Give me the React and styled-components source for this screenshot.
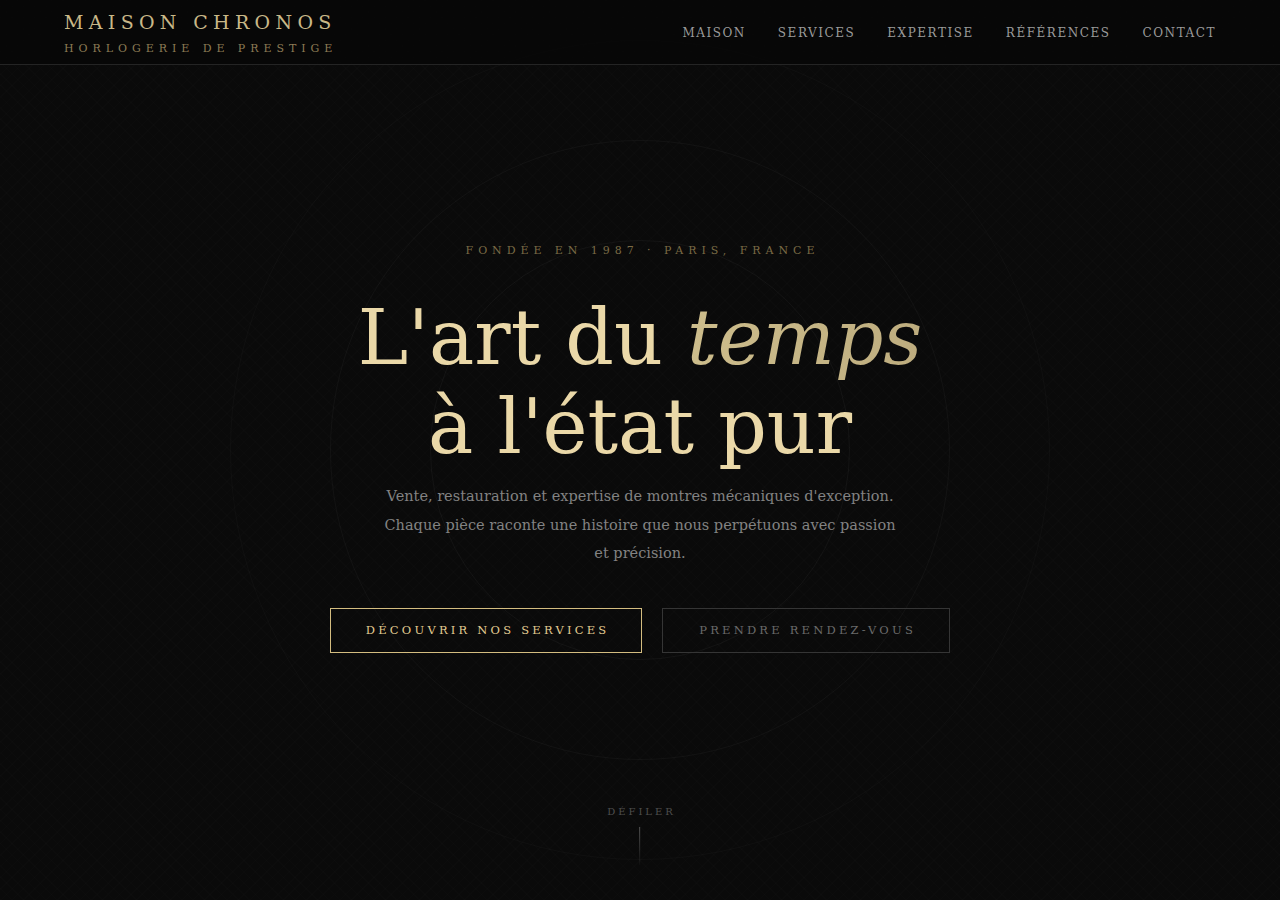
import React from "react";
import styled, { createGlobalStyle } from "styled-components";

const Global = createGlobalStyle`
  * { box-sizing: border-box; margin: 0; padding: 0; }
  html, body { background: #0a0a0a; }
  body { font-family: "DejaVu Serif", "Liberation Serif", serif; color: #e8d5a3; overflow: hidden; }
`;

const Page = styled.div`
  position: relative;
  width: 100%;
  height: 900px;
  overflow: hidden;
  background-color: #0a0a0a;
`;

const Header = styled.header`
  position: absolute;
  top: 0;
  left: 0;
  right: 0;
  z-index: 10;
  height: 65px;
  padding: 0 64px;
  display: flex;
  align-items: center;
  justify-content: space-between;
  background: rgba(8, 8, 8, 0.92);
  border-bottom: 1px solid #242424;
`;

const Brand = styled.div`
  display: flex;
  flex-direction: column;
  gap: 11px;
  margin-top: 2px;
`;

const BrandName = styled.div`
  font-size: 19px;
  letter-spacing: 0.28em;
  color: #c9b888;
  line-height: 1;
`;

const BrandSub = styled.div`
  font-size: 11px;
  letter-spacing: 0.45em;
  color: #8c7b55;
  line-height: 1;
`;

const Nav = styled.nav`
  display: flex;
  gap: 32px;
  margin-top: 1px;
`;

const NavLink = styled.a`
  font-size: 12px;
  letter-spacing: 0.128em;
  color: #9a9a9a;
  text-decoration: none;
`;

const Hero = styled.section`
  position: relative;
  height: 900px;
  display: flex;
  flex-direction: column;
  align-items: center;
  justify-content: center;
  text-align: center;
  background-image:
    repeating-linear-gradient(45deg, rgba(255,255,255,0.006) 0 1px, transparent 1px 8px),
    repeating-linear-gradient(-45deg, rgba(255,255,255,0.006) 0 1px, transparent 1px 8px);
`;

const Ring = styled.div`
  position: absolute;
  left: 50%;
  top: 50%;
  width: ${(p) => p.$size}px;
  height: ${(p) => p.$size}px;
  margin-left: ${(p) => -p.$size / 2}px;
  margin-top: ${(p) => -p.$size / 2}px;
  border-radius: 50%;
  border: 1px solid rgba(255, 255, 255, ${(p) => p.$alpha});
  pointer-events: none;
`;

const Content = styled.div`
  position: relative;
  z-index: 1;
  display: flex;
  flex-direction: column;
  align-items: center;
  margin-top: -3px;
`;

const Eyebrow = styled.div`
  font-size: 11px;
  letter-spacing: 0.45em;
  color: #7a6a45;
  margin-bottom: 36px;
  padding-left: 0.45em;
`;

const Title = styled.h1`
  font-weight: 400;
  font-size: 76px;
  line-height: 89px;
  color: #ead8a8;
  margin-bottom: 11px;
`;

const Em = styled.em`
  font-style: italic;
  background: linear-gradient(90deg, #cdbd8c, #bead7f);
  -webkit-background-clip: text;
  background-clip: text;
  color: transparent;
`;

const Lead = styled.p`
  font-size: 14.5px;
  line-height: 28.5px;
  color: #828282;
  max-width: 520px;
  margin-bottom: 40px;
`;

const Actions = styled.div`
  display: flex;
  gap: 20px;
`;

const Button = styled.a`
  display: inline-flex;
  align-items: center;
  justify-content: center;
  height: 45px;
  width: ${(p) => p.$w}px;
  font-size: 11.5px;
  letter-spacing: 0.28em;
  text-decoration: none;
  border: 1px solid ${(p) => (p.$primary ? "#d4bd80" : "#353535")};
  color: ${(p) => (p.$primary ? "#e2cc92" : "#6a6a6a")};
  padding-left: 0.28em;
`;

const Scroll = styled.div`
  position: absolute;
  left: 50%;
  bottom: 35px;
  transform: translateX(-50%);
  display: flex;
  flex-direction: column;
  align-items: center;
  gap: 10px;
  z-index: 1;
`;

const ScrollLabel = styled.div`
  font-size: 10px;
  letter-spacing: 0.3em;
  color: #4e4e4e;
  padding-left: 0.3em;
`;

const ScrollLine = styled.div`
  width: 1px;
  height: 38px;
  background: linear-gradient(to bottom, #555, rgba(60,60,60,0.1));
`;

export default function App() {
  return (
    <>
      <Global />
      <Page>
        <Header>
          <Brand>
            <BrandName>MAISON CHRONOS</BrandName>
            <BrandSub>HORLOGERIE DE PRESTIGE</BrandSub>
          </Brand>
          <Nav>
            <NavLink href="#">MAISON</NavLink>
            <NavLink href="#">SERVICES</NavLink>
            <NavLink href="#">EXPERTISE</NavLink>
            <NavLink href="#">RÉFÉRENCES</NavLink>
            <NavLink href="#">CONTACT</NavLink>
          </Nav>
        </Header>
        <Hero>
          <Ring $size={820} $alpha={0.025} />
          <Ring $size={620} $alpha={0.035} />
          <Ring $size={420} $alpha={0.04} />
          <Content>
            <Eyebrow>FONDÉE EN 1987 · PARIS, FRANCE</Eyebrow>
            <Title>
              L'art du <Em>temps</Em>
              <br />à l'état pur
            </Title>
            <Lead>
              Vente, restauration et expertise de montres mécaniques d'exception.
              Chaque pièce raconte une histoire que nous perpétuons avec passion
              et précision.
            </Lead>
            <Actions>
              <Button href="#" $primary $w={312}>DÉCOUVRIR NOS SERVICES</Button>
              <Button href="#" $w={288}>PRENDRE RENDEZ-VOUS</Button>
            </Actions>
          </Content>
          <Scroll>
            <ScrollLabel>DÉFILER</ScrollLabel>
            <ScrollLine />
          </Scroll>
        </Hero>
      </Page>
    </>
  );
}
